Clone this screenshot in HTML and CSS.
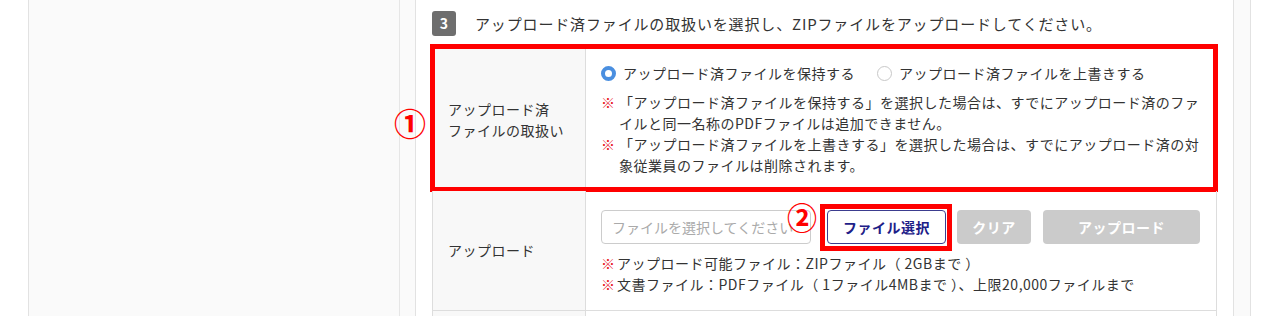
FILE: index.html
```html
<!DOCTYPE html>
<html lang="ja">
<head>
  <meta charset="UTF-8">
  <title>ZIPファイルのアップロード</title>
  <link rel="stylesheet" href="styles.css">
</head>
<body>
  <div class="page">
    <aside class="sidebar"></aside>

    <main class="panel">
      <div class="step">
        <span class="step-no">3</span>
        <p>アップロード済ファイルの取扱いを選択し、ZIPファイルをアップロードしてください。</p>
      </div>

      <div class="form-table">
        <div class="row row-mode">
          <div class="label">アップロード済<br>ファイルの取扱い</div>
          <div class="value">
            <div class="radios">
              <label class="radio checked"><span class="dot"></span>アップロード済ファイルを保持する</label>
              <label class="radio"><span class="dot"></span>アップロード済ファイルを上書きする</label>
            </div>
            <ul class="notes">
              <li>「アップロード済ファイルを保持する」を選択した場合は、すでにアップロード済のファイルと同一名称のPDFファイルは追加できません。</li>
              <li>「アップロード済ファイルを上書きする」を選択した場合は、すでにアップロード済の対象従業員のファイルは削除されます。</li>
            </ul>
          </div>
          <span class="mark mark-box"></span>
          <span class="num num-1">①</span>
        </div>

        <div class="row row-upload">
          <div class="label">アップロード</div>
          <div class="value">
            <div class="controls">
              <input type="text" class="file-name" placeholder="ファイルを選択してください">
              <div class="pick-wrap">
                <button class="btn btn-pick">ファイル選択</button>
                <span class="mark mark-btn"></span>
                <span class="num num-2">②</span>
              </div>
              <button class="btn btn-off btn-clear">クリア</button>
              <button class="btn btn-off btn-upload">アップロード</button>
            </div>
            <ul class="notes tight">
              <li>アップロード可能ファイル：ZIPファイル（&nbsp;2GBまで&nbsp;）</li>
              <li>文書ファイル：PDFファイル（&nbsp;1ファイル4MBまで&nbsp;）、上限20,000ファイルまで</li>
            </ul>
          </div>
        </div>

        <div class="row row-next">
          <div class="label"></div>
          <div class="value"></div>
        </div>
      </div>
    </main>
  </div>
</body>
</html>
```

FILE: styles.css
```css
* { box-sizing: border-box; margin: 0; padding: 0; }
html, body { height: 316px; overflow: hidden; }
body {
  font: 14px/21px "Noto Sans CJK JP", "Noto Sans", sans-serif;
  letter-spacing: .5px;
  color: #333;
  background: #fff;
}
.page {
  display: flex;
  gap: 15px;
  margin-left: 28px;
  width: 1223px;
  height: 316px;
  padding-right: 16px;
  background: #fafafa;
  border-left: 1px solid #e2e2e2;
  border-right: 1px solid #e2e2e2;
}
.sidebar {
  width: 371px;
  border-right: 1px solid #e6e6e6;
}
.panel {
  width: 819px;
  background: #fff;
  border-left: 1px solid #e2e2e2;
  border-right: 1px solid #e2e2e2;
  padding: 11px 16px 0;
}
.step {
  display: flex;
  align-items: center;
  gap: 19px;
  height: 25px;
  margin-bottom: 11px;
}
.step-no {
  width: 24px;
  height: 25px;
  border-radius: 3px;
  background: #6e6e6e;
  color: #fff;
  font-weight: bold;
  font-size: 14px;
  line-height: 25px;
  letter-spacing: 0;
  text-align: center;
}
.step p { font-size: 15px; letter-spacing: .85px; }

.form-table { border-top: 1px solid #ddd; }
.row {
  position: relative;
  display: grid;
  grid-template-columns: 153px 1fr;
  border: 1px solid #ddd;
  border-top: none;
}
.label {
  display: flex;
  align-items: center;
  padding: 0 15px;
  background: #f8f8f8;
  border-right: 1px solid #ddd;
}
.value { padding: 15px 15px 14px; }
.row-mode .label { padding-top: 2px; }
.row-upload .value { padding: 19px 15px 15px; }
.row-next { height: 60px; }

.radios { display: flex; gap: 22px; }
.radio { display: flex; align-items: center; gap: 7px; }
.dot {
  width: 15px;
  height: 15px;
  border-radius: 50%;
  border: 1px solid #c8c8c8;
  background: #fff;
}
.radio.checked .dot { border: 4px solid #4a8fe0; }

.notes { list-style: none; margin-top: 8px; }
.notes li { position: relative; padding-left: 18px; }
.notes li::before {
  content: "※";
  position: absolute;
  left: 0;
  color: #e8101c;
  font-weight: bold;
}
.notes.tight { margin-top: 9px; }
.notes.tight li { padding-left: 16px; }

.controls { display: flex; align-items: center; }
.file-name {
  width: 210px;
  height: 34px;
  padding: 0 10px;
  border: 1px solid #ccc;
  border-radius: 4px;
  font: inherit;
  color: #333;
}
.file-name::placeholder { color: #aaa; }
.pick-wrap { position: relative; margin: 0 11px 0 16px; }
.btn {
  height: 34px;
  border-radius: 4px;
  font: bold 14px "Noto Sans CJK JP", "Noto Sans", sans-serif;
  letter-spacing: .5px;
}
.btn-pick {
  width: 119px;
  background: #fff;
  color: #1d2088;
  border: 1px solid #3b3d8f;
}
.btn-off {
  background: #cbcbcb;
  color: #fff;
  border: none;
}
.btn-clear { width: 74px; margin-right: 12px; }
.btn-upload { width: 157px; }

.mark {
  position: absolute;
  border: 5px solid #ff0000;
  pointer-events: none;
}
.mark-box { top: -4px; left: -3px; right: -2px; bottom: -2px; }
.mark-btn { top: -6px; left: -7px; right: -6px; bottom: -7px; }
.num {
  position: absolute;
  color: #ff0000;
  font: bold 32px/1 "Noto Sans CJK JP", sans-serif;
  letter-spacing: 0;
}
.num-1 { left: -39px; top: 58px; }
.num-2 { left: -40px; top: -9px; font-size: 30px; }
```
